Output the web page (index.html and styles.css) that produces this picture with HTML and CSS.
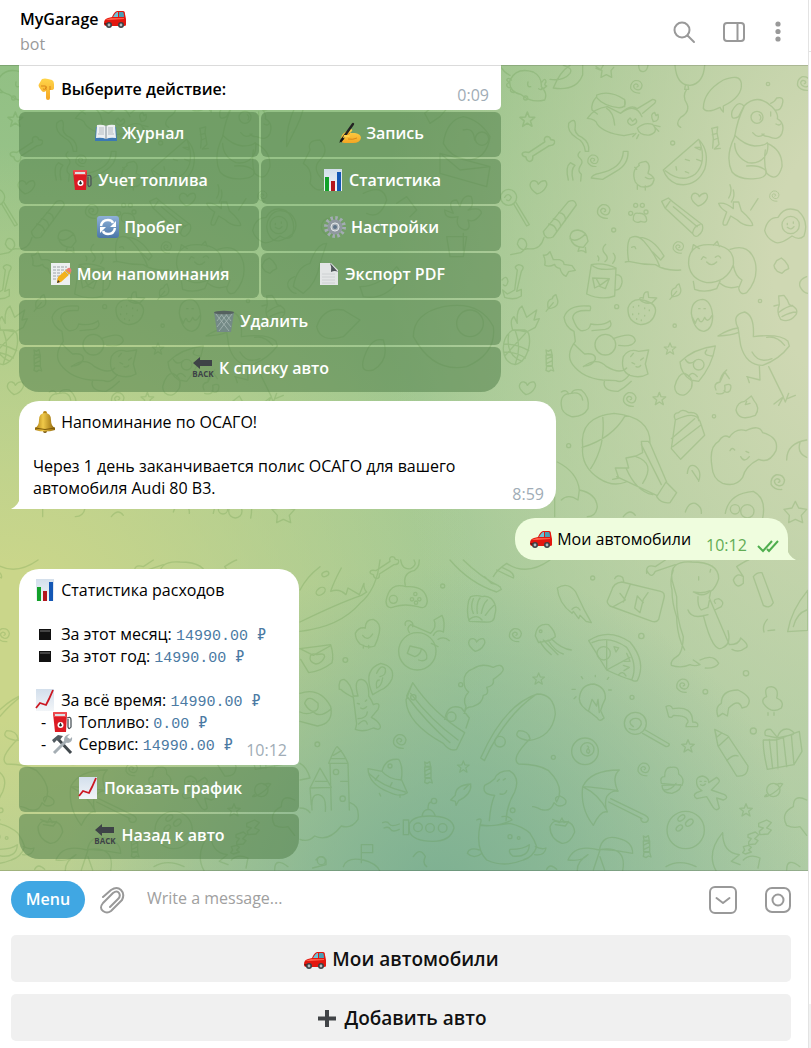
FILE: index.html
```html
<!DOCTYPE html>
<html lang="ru">
<head>
    <meta charset="UTF-8">
    <meta name="viewport" content="width=device-width, initial-scale=1.0">
    <title>MyGarage</title>
    <link rel="stylesheet" href="styles.css">
</head>
<body>

<!-- emoji and doodle symbols -->
<svg class="sprite" aria-hidden="true">
    <defs>
        <linearGradient id="gold" x1="0" x2="1" y1="0" y2="0"><stop offset="0" stop-color="#a8780c"/><stop offset=".4" stop-color="#f0c94a"/><stop offset="1" stop-color="#8f6408"/></linearGradient>
        <linearGradient id="skin" x1="0" x2="0" y1="0" y2="1"><stop offset="0" stop-color="#ffd54a"/><stop offset="1" stop-color="#f5a623"/></linearGradient>
        <linearGradient id="paper" x1="0" x2="0" y1="0" y2="1"><stop offset="0" stop-color="#d3dfec"/><stop offset="1" stop-color="#f2f5f8"/></linearGradient>
        <linearGradient id="blue" x1="0" x2="0" y1="0" y2="1"><stop offset="0" stop-color="#8fb1d8"/><stop offset="1" stop-color="#4a76a8"/></linearGradient>
    </defs>
    <symbol id="car" viewBox="0 0 24 22">
        <path d="M1 15q0-4 4-5l4-1q2-5 5-6h6q2 0 2 3l1 5v6q0 1-2 1H3q-2 0-2-3z" fill="#e3170f"/>
        <path d="M10 9q2-4 4-5h1v5z" fill="#6cc5d8"/><path d="M16 4h4q1 1 1 5h-5z" fill="#4a9fb5"/>
        <path d="M2 12l6-2 13 0v1l-13 1z" fill="#ff5a45"/><path d="M1 15h4v2H2z" fill="#7d130f"/>
        <circle cx="6" cy="17" r="3" fill="#3b4145"/><circle cx="18" cy="17" r="3" fill="#3b4145"/>
        <circle cx="6" cy="17" r="1.4" fill="#b4bcc0"/><circle cx="18" cy="17" r="1.4" fill="#b4bcc0"/>
    </symbol>
    <symbol id="point" viewBox="0 0 24 22">
        <path d="M9 1q3-1 6 0l4 1q2 1 2 4v4q0 2-3 2h-1v8q0 2-2 2t-2-2v-7l-2 1q-2 0-3-2L6 9Q5 7 6 6z" fill="url(#skin)"/>
        <path d="M8 8h4q2 0 1 2t-3 1M13 12V9M17 12V8" fill="none" stroke="#d9861a"/>
    </symbol>
    <symbol id="book" viewBox="0 0 24 22">
        <path d="M2 5h20l1 14H1z" fill="#3c78b4"/><path d="M3 3q5-1 9 1v13q-4-2-10-1zM21 3q-5-1-9 1v13q4-2 10-1z" fill="#eceff1"/>
        <path d="M12 4v13" stroke="#7d8a94"/><path d="M5 6h5M5 8h5M5 10h5M4 12h6M14 6h5M14 8h5M14 10h5M14 12h6" stroke="#b5bcc2"/>
    </symbol>
    <symbol id="write" viewBox="0 0 24 22">
        <path d="M3 18q0-5 3-7l6-4q3 0 2 2l-2 2h5q6 1 6 5-1 5-8 5H7q-4 0-4-3z" fill="url(#skin)"/>
        <path d="M12 11q-2 2-5 2M10 17q5 1 9-1" stroke="#d9861a" fill="none"/>
        <path d="M3 19L15 2" stroke="#222" stroke-width="2.4" stroke-linecap="round"/><path d="M1 21l3-5 2 1z" fill="#111"/><path d="M6 13l5 0q2 2-1 2l-5 1z" fill="#ffd04a"/>
    </symbol>
    <symbol id="fuel" viewBox="0 0 24 22">
        <path d="M17 7q4-2 4 2v7q-2 3-3 0V8" fill="none" stroke="#4d555a" stroke-width="1.3"/>
        <path d="M3 2h14l-1 19H5z" fill="#dc1b24"/><path d="M3 1h14l-1 5H4z" fill="#ef4a4f"/><path d="M5 3h10v2H5z" fill="#dce2e4"/>
        <circle cx="10.500" cy="14" r="3" fill="#fff"/><path d="M10.500 11.500l1.500 3q-1.500 2-3 0z" fill="#222"/>
    </symbol>
    <symbol id="bars" viewBox="0 0 24 22">
        <path d="M3 0h18v22H3z" fill="url(#paper)"/><path d="M4 8h4v14H4z" fill="#12a12a"/><path d="M10 12h4v10h-4z" fill="#b3151d"/><path d="M16 3h4v19h-4z" fill="#1457b5"/>
    </symbol>
    <symbol id="reload" viewBox="0 0 24 22">
        <rect x="1" y="0" width="22" height="22" rx="3" fill="url(#blue)"/>
        <path d="M5 10q1-6 7-6 4 0 5 3M19 12q-1 6-7 6-4 0-5-3" fill="none" stroke="#fff" stroke-width="2.400"/><path d="M20 5v6h-6zM4 17v-6h6z" fill="#fff"/>
    </symbol>
    <symbol id="gear" viewBox="0 0 24 22">
        <circle cx="12" cy="11" r="9" fill="none" stroke="#a3acb3" stroke-width="4" stroke-dasharray="2.400 2.312"/>
        <circle cx="12" cy="11" r="6" fill="#a9b1b7" stroke="#8f989f" stroke-width="3"/><circle cx="12" cy="11" r="4" fill="none" stroke="#e0e4e7"/><circle cx="12" cy="11" r="2" fill="#5d7387"/>
    </symbol>
    <symbol id="memo" viewBox="0 0 24 22">
        <path d="M2 0h19v22H2z" fill="#edf0f1"/><path d="M4 4h14M4 7h13M4 10h9M4 13h8M4 16h5" stroke="#9da4a8" stroke-dasharray="3 1"/>
        <path d="M8 18l1-4 9-8 4 4-10 9-4 1z" fill="#f2b21d"/><path d="M17 7l2-2q2-1 3 1t0 3l-1 1z" fill="#e77d78"/><path d="M16 8l4 4" stroke="#b8c0c4"/><path d="M8 20l1-3 2 2z" fill="#39332b"/>
    </symbol>
    <symbol id="page" viewBox="0 0 24 22">
        <path d="M3 0h11l7 7v15H3z" fill="#e3e5e6"/><path d="M13 0l8 9q-3-2-7 0 1-5-1-9z" fill="#4e5559"/><path d="M5 11h13M5 14h13M5 17h13M5 20h13" stroke="#cdd0d2"/>
    </symbol>
    <symbol id="bin" viewBox="0 0 24 22">
        <path d="M2 2h20l-3 20H5z" fill="#748a86"/><path d="M4 4l13 17M8 3l11 14M13 3l6 8M20 4L7 21M16 3L5 17M11 3l-6 8" stroke="#a7b8b4" stroke-width=".8"/><ellipse cx="12" cy="2.500" rx="10" ry="1.800" fill="#55615f"/>
    </symbol>
    <symbol id="bell" viewBox="0 0 24 22">
        <circle cx="12" cy="2" r="2" fill="#b5830f"/><circle cx="12" cy="20" r="2" fill="#6d4c0a"/>
        <path d="M12 2q6 0 6 7 0 6 4 8v2q-10 3-20 0v-2q4-2 4-8 0-7 6-7z" fill="url(#gold)"/><path d="M2 17q10 3 20 0" fill="none" stroke="#7c5909"/>
    </symbol>
    <symbol id="square" viewBox="0 0 24 22"><path d="M6 6h12v11H6z" fill="#111"/><path d="M7 7h10v2H7z" fill="#444"/></symbol>
    <symbol id="trend" viewBox="0 0 24 22">
        <path d="M3 0h18v22H3z" fill="url(#paper)"/><path d="M3 19l4-5 6 2 3-6 4-9" fill="none" stroke="#cc1821" stroke-width="1.800"/>
    </symbol>
    <symbol id="tools" viewBox="0 0 24 22">
        <path d="M21 20L8 6" stroke="#41484d" stroke-width="3"/><path d="M2 7l6-5 5 1-4 5-2-1-3 3z" fill="#525b61"/>
        <path d="M4 20L17 7" stroke="#a5aeb4" stroke-width="3"/><path d="M14 7q0-5 6-6l-3 3 3 2 2-2q1 5-4 6l-3-1z" fill="#a5aeb4"/>
    </symbol>
    <symbol id="plus" viewBox="0 0 24 22"><path d="M12 2v17M3 10.500h18" stroke="#414447" stroke-width="4"/></symbol>

    <symbol id="d-star" viewBox="-24 -24 48 48"><path d="M0-19L5-6 19-5 8 4 12 18 0 10-12 18-8 4-19-5-5-6z"/></symbol>
    <symbol id="d-spiral" viewBox="-24 -24 48 48"><path d="M12 21Q-8 22-17 7-20-12-3-20 16-22 20-5 18 13 3 10-8 6-8-3-3-12 5-7q5 6-2 8"/></symbol>
    <symbol id="d-heart" viewBox="-28 -24 56 48"><path d="M-4 20Q-24 6-24-6-22-20-10-18-2-16 0-8 8-20 20-18 28-10 22 0 14 16-4 20z"/></symbol>
    <symbol id="d-candy" viewBox="-18 -36 36 72"><path d="M-10-32l7 4 8-5 3 14H-8zM-10-17H9V15H-9zM-8 17H9l4 14-8-3-7 5-8-4zM-10-4L9-14M-9 9L9 0"/></symbol>
    <symbol id="d-leaf" viewBox="-24 -28 48 56"><path d="M-22 26L0 0M-15 18Q-22-8-3-12-2-20 8-24l3 10Q22 14-15 18"/></symbol>
    <symbol id="d-bone" viewBox="-46 -36 92 72"><path d="M-24 10L18-18q-4-12 6-14 8 0 10 8 12 0 10 8-2 8-14 8L-14 20q2 12-8 14-9-2-10-12-10-2-10-8 2-8 18-4z"/></symbol>
</svg>

<div class="window">
<div class="chat">

    <header class="header">
        <div>
            <h1 class="title">MyGarage <svg class="emoji"><use href="#car"/></svg></h1>
            <p class="status">bot</p>
        </div>
        <div class="header-actions">
            <button class="icon-btn" aria-label="Search">
                <svg width="24" height="24" viewBox="0 0 24 24"><circle cx="10" cy="10" r="7.500"/><path d="M15.500 15.500L22 22"/></svg>
            </button>
            <button class="icon-btn" aria-label="Info">
                <svg width="24" height="24" viewBox="0 0 24 24"><rect x="2" y="3" width="20" height="18" rx="3"/><path d="M15.500 3v18"/></svg>
            </button>
            <button class="icon-btn dots" aria-label="More">
                <svg width="6" height="24" viewBox="0 0 6 24"><circle cx="3" cy="4" r="2.600"/><circle cx="3" cy="11.500" r="2.600"/><circle cx="3" cy="19" r="2.600"/></svg>
            </button>
        </div>
    </header>

    <main class="history">
        <svg class="wallpaper" viewBox="0 195 2424 2418" preserveAspectRatio="xMidYMid slice" aria-hidden="true">
            <g id="doodles">
                <!-- top right -->
                <g transform="translate(1680 0)">
                    <path d="M108 205l14 5 8-15M108 200l18 12-3 20 16-8 16 8-2-20 8-10M236 196q0 20 14 19 12-2 14-20"/>
                    <path d="M345 196q5 60 45 60 40-5 44-60M376 256l-2 12 12 0-2-12M380 268q-14 20 0 42 12 25-18 42-18 20 0 30"/>
                    <path d="M430 325q0-50 60-85 50-20 54 10 4 40-54 68l0 18q-8-8-10-14-40 20-50 3z"/>
                    <path d="M110 285q40-16 84 14 8 26-20 24-44-6-64-30zM110 290q-18 20-14 40l16 12M194 300v20M82 355q20-30 60-35l40 20q44-34 64 10M82 355q26 2 30 18 20 26 80 34l30-6M140 325q20 10 24 50M182 340q30-30 50-14l46-28q14 2 6 12l-36 30"/>
                    <path d="M232 385q20-20 46-12 20 24-10 32-30 2-36-20zM214 376q-20-10-4-22l8 10 8-8q12 14-12 20zM280 365q-12-24 4-28l4 10 6-4q6 20-14 22M228 400l-10 10M236 404l-6 12M284 376l16 4M284 382l12 12"/>
                    <path d="M26 370q20-20 20 6-6 26 20 36 24 16 20 42l-10 0q-4-30-26-40-30-20-24-44zM60 455q-12 10 0 20t0 24q-8 14 4 24l-2 20M25 540q-10-40 6-52l14 8q-14 14-6 44"/>
                    <path d="M190 454h14q2 40-36 60l-40 24-34-4q2-10 24-14 70-14 72-66z"/>
                    <path d="M310 510l106-92q34 36 18 90-26 56-84 44-30-12-40-42zM316 512q50 40 90 10 36-36 12-100M405 442l16 8 0-8zM376 478l12 4M410 478l16 6M348 500l2 10M376 515l10 4"/>
                    <path d="M455 385l18-4-2 16 6 36-14 14 18-2M456 386l4 30-2 28M457 404l14-4M460 420l15-6"/>
                    <path d="M552 318q40-40 84 2 20 20 16 36 24 14 14 44-10 24-40 10-14 0-20-8M552 318q-18-20-36 16-6 30 20 16zM632 310q12-4 18-16 22-6 18 14-4 24-20 22M552 320q-20 40-28 90-30 60-8 106 20 24 70 20 40-4 30-26-20-16-56-12M524 406q30 30 60 32 30 0 38-10M524 430q0 40 40 58 40 6 56-28 6-20 2-32M622 430q46 20 44 70-14 50-46 20-10-30-4-70M648 372q10 6 14 0M578 398q16 20 34 4"/>
                    <circle cx="591" cy="352" r="18"/><path d="M598 344q8 6 2 16M632 336v12"/>
                </g>
                <!-- top left corner of the open area -->
                <g transform="translate(1500 180)">
                    <path d="M30 60q20-40 70-24 26 14 24 44 20 20 10 40-40 10-70-16-40-10-34-44zM34 60q-10-10-14 0l8 8q-14 4-4 14l10 2q-8 12 8 14M126 66q10-16 12 0-8 10 2 12-6 8-16 8M0 16q10 20 30 30M84 66q-4 16 8 14M116 86q8 6 12 0M160 84q20-50 50-68M160 84q70 10 88-40v-30M190 16q30 8 20 24-20 24-60 18"/>
                    <path d="M406 366q-8-20-2-36 6-10 14-14-8-8 20-12 16 10 6 36 20 10 18 20-6 26-40 20-10-4-16-14zM412 376v12M436 378v12M436 352q10 8 22 2M404 322l6 6"/>
                    <path d="M690 374q8 20-4 40M700 390q6 20-6 36M752 450l22-34"/>
                </g>
                <!-- right side -->
                <g transform="translate(1500 600)">
                    <path d="M130 95l75-90q20-10 24 10l-70 96q-24 10-29-16zM146 72q20 2 24 22M160 56q22 4 22 24M176 38q22 2 20 24M132 112q-10 40-50 34-20 10-30-14 4-24 20-14 20 20-10 40l-30 6M40 10L80 78l8-4L48 8"/>
                    <circle cx="26" cy="-8" r="24"/><path d="M14-8q10-16 20 0-6 14-14 8"/>
                    <path d="M485 4l20-10 14 12 88 68q6 20-14 34-10 4-14-6L495 24zM510 4l-14 20M600 74q-18 4-22 24M520 20l72 60"/>
                    <path d="M400 60q-2-24 16-20 22-2 24 20 0 10-18 4-14 8-22-4z"/><circle cx="392" cy="40" r="6"/><circle cx="407" cy="16" r="6"/><circle cx="427" cy="16" r="6"/><circle cx="438" cy="36" r="6"/>
                    <path d="M656 10q20-4 44 16l0-20 16 0 8 26q34 30 34 44-26 4-46-16l-20-12-12 26q-14 6-10-10l10-28q-20-12-24-26zM794 92q8-40 40-40 20-36 60-20 34 30 18 76-14 14-36 0-40 30-56 16-20-10-26-32z"/>
                    <circle cx="872" cy="75" r="26"/><path d="M862 70v4M880 66v4M862 82q12 10 20-2"/>
                    <path d="M210 110q2-20 24-20 28 4 30 34l-14 18q-34 0-40-32zM238 142l-4 12q14-6 24 4l-2-16M210 116q20 14 46-14"/>
                    <path d="M130 165q10 4 20-10l10 24 18 0q14 4 14 14l24 4 10 14-20 4-8 14q-14-6-18-24-14-2-16-12-18 10-30 2 4-14-4-30z"/>
                    <path d="M274 194q34-8 74 10l-4 84q-40 14-84-6zM274 194q20 20 74 12M348 224q20 0 18 24-4 24-22 22M278 234l50 2-12 30-20-8-12 6zM290 238l10 18 28-20M295 182q4-8-2-14M315 185q14-10 0-24t2-28M338 190q14-16 2-30"/>
                    <path d="M376 186l10-2q-8-50 4-70 20-12 40 8 36 40 50 80M386 184q40 10 80 10 30 20 76 16M418 112q40 0 74 56l-10 12-24-24M395 142q10-6 12 4"/>
                    <path d="M566 194q-4-60 60-60 80 0 74 60-20 54-80 54-48-10-54-54zM576 152l4-18 18 12M640 136l12-12 6 16M604 178l6-8 8 4M646 172q10-10 16 2M620 186q14 16 30 0M690 148q60-20 76 40 10 50-26 90-20 10-24-14l10-24q-20-10-26-44M580 244l4 24q30 12 66-2l10-22M660 250q24 20 54 10"/>
                    <path d="M822 196l8-14 14-8 10 8 10 14 2 10-12 6-8 8-14-6-8-10zM920 230q-26 10-20 30 10 20 24 20M822 318l16-4-2-26 16-2 10 14 6 14q30 10 20 30-20 26-46 14-14-20-4-44zM838 336q20-16 40-20M846 350q24-14 44-14"/>
                    <path d="M6 240q14-18 18 4-4 20-14 10M44 270l8-60q-14-10 4-16 22 4 8 20l-14 60 14-6 0 20q-20 14-50 4l-6-22 14 12z"/>
                    <path d="M384 324q10-30 44-24 44 10 38 38-8 34-44 36-40-8-38-50zM420 300q-4-10 10-6 0-20 14-18l2 16 24 2-14 14q-20 6-36-8"/>
                    <path d="M400 320v2M416 316v2M434 324v2M448 330v2M398 342v2M416 340v2M434 346v2M410 356v2M424 360v2"/>
                    <path d="M574 340q0-40 34-42 26 4 30 50 0 40-26 46-30-2-38-54zM576 350l10 20q8-24 12-8 8 10 16-10 8 20 22-6M596 326h4M612 326h4"/>
                    <path d="M38 390q-30 20-28 60 4 40 36 44 34-10 42-60 4-40-14-44zM12 432q40 0 74 20M10 456q40 0 66 18M46 392q20 50 0 100M26 404q-10 60 40 80M76 400L14 468M38 390q-10-30 4-40l10 20q-4-40 14-52l14 34 30-22-8 30 16-4-12 26-26 14-20-4z"/>
                    <path d="M270 332q6-16-6-14-60-4-72 34 4 30 30 42l4 30q-30 40-8 70 30 40 90 46l40 2q20 10 40-18M270 332q-50-4-52 22 10 30 24 38 26 2 30-20 40 6 58-10 10 20-14 26l-40 4M222 432q20 20 32 30 34-4 32 16-10 20-34 20M250 500q40-30 70 0 40 24 60 4M314 540q-10 34 40 34 20-10 40-30"/>
                    <circle cx="316" cy="434" r="31"/><path d="M370 470q-10 44 20 56 30 10 54-4l-8-30 10-42-30 4q-30-10-46 16zM340 416q60-24 66 6-8 20-50 14M396 488l8 4M422 480l8-6M408 500q10 4 14-4M400 460l-8 10"/>
                    <path d="M540 486q40-40 106-48-10 60-50 106l-24-4q-30-20-32-54zM556 478q10 20 30 4M620 450q-14 16 16 18M524 560q10-40 30-40 30 14 20 44-20 34-44 14-6-8-6-18z"/><circle cx="596" cy="494" r="16"/><path d="M566 530q10-20 26 0"/>
                    <path d="M654 408q30-20 60-24-20-40 20-48 30 10 26 74 80-10 104 14l4 14q-30 40-80 58-50 0-66-60l-8-54M654 408q40-2 60-10M800 412q30-6 54 24M756 456q20 36 60 20M778 496l2 44-40-10M742 530l6 18M806 500l44 90M822 612l28-22-14 26M850 592l6 14 10-26M862 596l24-10"/>
                    <path d="M648 570q-10-20 12-24l14-30M660 546q0-20 20-36M674 516l14 20M650 580q30 8 24-24 26-10 16 16-10 10-18 0"/>
                    <path d="M184 616q-4-36 30-36 6-14 30-10 26 20 20 56-14 26-50 24-30-10-30-34zM214 580q30-6 34 20M184 576q16-10 22 6M708 630q4-24 26-26l20-16 8 14q20 22 4 44-50 20-58-16zM740 604l-4 10 14-4"/>
                    <path d="M248 740q-10-90 94-100 110 10 108 90M248 740q-6 60 50 96 40 26 80 10M450 730l-6-6-20 0 4 34-20 10-30 6 8 30-40 0 10 30-18 4M308 646q10 90-36 160M376 646q-40 70-130 96M450 730l50 116M424 734l60 120M350 830l120 56M378 804q30 70 80 80M408 770q60 20 20 80M470 890l28-44 32 32-20 30q-26 4-40-18z"/>
                    <path d="M514 746l12-86q60-30 74 4l14 42-72 72zM526 660q-10-20 10-22 10-14 30 0 30-4 30 24M514 716l70-60M518 740l84-64"/>
                    <path d="M636 800q-10-60 20-76 14-24 32-12 20-30 50-20 40-20 50 6 50 14 40 54-20 40-52 26-40 20-48 54-20 30-60 18-30-14-32-50zM690 752q6-12 14-2M722 770q10 20 26 0M738 754l8 4"/>
                    <path d="M562 820q4-34 26-20 18 14 8 44M596 842l-20-30M860 780q0-50 60-60M900 728q-10 30 20 44M676 940q10-60 84-66 40 20 28 80M164 950v-60M172 786q60 30 66 84l-4 30q-30-20-50 0M238 870q50 10 54 50-4 30-30 30M556 936q10-30 30-26 20 10 18 30M370 950q20-26 36-4"/><circle cx="705" cy="928" r="14"/><circle cx="742" cy="934" r="20"/>
                    <path d="M886 904l10 20 24 4-16 18 4 22-22-10-20 10 2-22-16-18 24-4z"/>
                </g>
                <!-- lower part -->
                <g transform="translate(900 1680)">
                    <path d="M240 0q-10 90-60 130-60 70-180 84M0 186q110-54 184-80l16-10q-10-10-8-26l-14 34-34-20-6 20q-20-20-46-10 10-30 32-70M0 90q20-40 60-70"/><ellipse cx="62" cy="94" rx="15" ry="10" transform="rotate(-35 62 94)"/><ellipse cx="76" cy="42" rx="11" ry="7" transform="rotate(-25 76 42)"/>
                    <path d="M302 0q4 30 30 26 20-10 10-26M358 0q0 30-24 34-26 10-18 42M258 124q10-60 60-44 60-4 64 44-4 26-28 16-40-10-70 0-24 10-26-16z"/><circle cx="280" cy="118" r="12"/><circle cx="346" cy="102" r="5"/><circle cx="336" cy="118" r="5"/><circle cx="358" cy="118" r="5"/><circle cx="348" cy="128" r="5"/>
                    <path d="M450 0q60 70 140 96l14-8q-4-14-30-18l-20-20M490 0q50 50 110 80M590 30l50 24q4-10-10-20l-24-12M580 50q10-20 40-40 60 40 130-10M506 122l6-12q20-6 34 0 14-4 28 6 20 20 10 50 0 24-30 20l-46-2q-10-24-2-62zM520 160q-10-20 0-44M532 160q-4-30 8-46M544 160q6-30 18-40M556 166q14-20 26-30M506 180q24-20 40 0"/>
                    <path d="M772 84q30-20 54 10l26 54 22 40-16-4-18-18-4 10-16-22-4 6q-40-30-44-76zM816 148q14-14 24 2M1040 40q-4-30 26-20l30-20M1040 30q14 30 26 4l60-20"/>
                    <path d="M934 94q6-26 32-28l116 28q14 4 10 20l-16 64q-6 10-20 6l-126-46q-10-10-8-16zM960 100l16 20-36 20M990 76l-20 50M1044 98l-14 20-10 40-16-14 8-36 18 20M944 56q6-14 24-4l4 16"/>
                    <path d="M1116 60q-10-60 60-54 80 0 80 50-10 30-24 38l-4 20 60 140q30 0 34-20 30 24 14 30-20 16-40 4M1116 60l14 50q-2 60 20 120-2 50-20 60-20 12-16 26 30 10 56-2 14 6 30 0l-20-14M1200 300q40-20 56 10-10 16-40 14M1120 30q-12 30-4 60 0 40 14 80 0 40 14 80l10 20M1180 96q30 6 50-4-8 14-32 12zM1196 60v-10M1230 36l2-8M1194 110q-2 30 10 40l20-8 4-20M1164 150q10 30 60 14M1210 166q30 120 60 96 24-10 14-50M1246 130q-10-12 10-14 20 10 8 24l-20 10"/>
                    <path d="M1300 60q10-24 30-10l0 20q-20 20-30-10M1330 50l-20-30q30-20 36-20M1360 50q10-14 26-12l34 90q-10 20-30 8zM1463 215l60-4v-120q-50 60-60 124zM1480 200q10-40 40-50M1392 216q-6-20 10-38M1404 212l20-2"/>
                    <path d="M166 220q10-20 30-16 0-26 24-26 24 10 18 40-4 20-14 40-20 8-44-6-14-14-14-32zM188 226q14 20 30-4M190 256v8M206 256v8M0 266q50-6 92-12 10 30 4 54-30 24-70 30l-24-40M0 266l40 20 50-28M30 296q0-20 20-12 24-6 24 6-8 20-26 22-16-4-18-16z"/>
                    <circle cx="352" cy="274" r="56"/><path d="M316 196q-4-14 12-14 14 6 10 18M328 218q-10-14 4-24l60 26q20-20 10-40l24-14q10 20 4 50-20-10-30 10M322 280l8-22 34 8q-2 20-20 24zM364 266q20 10 16 30-10 10-24 4M414 238q20-10 34 4M394 250l20 10"/>
                    <path d="M706 228q4-40 40-34 20 20 20 36l-14 10-36 8zM720 244q10 20 34 40M730 240q20 20 44 44M744 240q20 34 46 42M754 236q30 30 60 34"/><circle cx="722" cy="214" r="4"/>
                    <path d="M866 242q60-40 124 4 50 60 22 116-10 4-16-2-20-4-76-30zM876 248q50-24 104 14 34 50 16 96M920 242v88l70-38"/><circle cx="911" cy="280" r="20"/><path d="M942 260l14 4-8 12zM980 280l10 24-18 0M970 316l18 6-16 10M956 344q12-14 22 4"/>
                    <path d="M118 388q-4-30 14-30 20 10 28 50l14 0q-14-50 10-50 24 4 22 50 10 14 14 26 24-10 14 14l-20 24q20 10 26 24 4 10-6 12l-14-4q-30 14-54 4l4-16-10-80q-24-10-38-24zM172 430l6 2M196 424l4-4M182 444q10 6 18-4M174 476q26 0 28-20M176 492q20-20 26 0"/><path d="M218 404l-6-16q-20-60 30-78 44 10 34 46-10 24-34 34zM238 360q-12 0-8 24 14-4 18-30M230 340q14-30 26-14 4 20-16 24"/>
                    <path d="M0 400q60-20 92 40 10 50-40 58L0 484M0 456q20 10 40 0 20 20 54-10M14 430q10-30 40 0 4 24-16 24-14-4-24-24z"/>
                    <path d="M338 368q60 90 156 150l-24 50q-20 8-40-18-110-60-112-130zM338 368l-18 40q60 80 130 140M332 400q60 80 142 140M434 478q10-50 50-34l24 30-10 30M494 460q0-20 24-20 30-10 32-34 20-4 10-24 24-4 20-24 30-20 30-30-4-20-30-6-34-14-60 4-30 10-28 40 0 20 14 30-20 20-8 44l-6 20"/><circle cx="454" cy="470" r="14"/><circle cx="340" cy="412" r="8"/>
                    <path d="M542 594q70-160 170-192 50 0 54 60-10 70-80 80-50-10-30-30 30 0 34 24-60 60-34 76 60 0 90 20 50 50 24 94-10-16 10-18 24 10 16 24-20 14-34-4-10 30-40 20-20-10-24-8M554 600q60-130 150-194M542 594l12 8"/><circle cx="600" cy="545" r="16"/>
                    <path d="M838 416q4-44 44-44 36 10 34 44-10 20-14 36l10 22q-14 14-20 0l-20-16q-34-20-34-42zM866 452l10-34 14 20 4-20 4 40M816 388h10M822 416l6-6M848 356l-4-6M886 350v-4M922 358l4-6M926 390h8"/>
                    <circle cx="1006" cy="490" r="33"/><path d="M1000 500q-20-14 0-24 24-4 24 16-10 26-36 14M1036 510l72 42q0 8-10 8l-70-40M1098 440q14-8 20 6 60-10 60 40 20 0 14 14h-34q0-8 6-14 0-20-44-20-4 10-14 4zM1254 470q-10-30 10-40 0-40 50-40 50 24 26 50l-14 4q-10-30-40 0l-4 24-14-8zM1390 430q-6-14 10-20-10-30 14-30 24 4 16 34 24 10 14 30-30 20-54-14zM1404 458v8M1422 458v8"/>
                    <circle cx="855" cy="574" r="40"/><circle cx="862" cy="568" r="20"/><path d="M862 558q8 4 0 10-6 8 4 12 6-6 0-12"/>
                    <path d="M1244 508l40 20 60 90q0 34-34 30l-56-90zM1256 558l30-28M1280 602q20-20 34-14M1244 508l6 24 14-12M1390 540l40 0 68-26 8 60-24 40-80 14q-14-60-12-88zM1408 538l10 88M1430 538l4 88M1450 532l10 88M1474 524l8 90M1396 526q-6-20 16-18l20 24q10-30 36-24 20 10 10 16l-46 10z"/>
                    <!-- castle on a cloud -->
                    <path d="M86 610q20-50 26-50 20 20 32 50zM90 610l4 140M144 610l4 140M0 610q20 10 30 44l-30 6M30 684l30-60 34 58zM30 684l4 50M36 750q-4-50 20-46 24 4 20 50M94 596h44M100 586l24-14M122 664h24M46 664h34M0 744q20 0 30 14M150 728q30 10 24 50-20 30-50 20-40 50-80 30-20 20-44 10"/><circle cx="108" cy="636" r="8"/><circle cx="128" cy="716" r="8"/>
                    <path d="M204 626l42 8q10-40 50-36 14 20 8 60l18 40q-20 16-56-2-60-24-62-70zM246 634q20 24 58 26M206 640q40 40 110 56M238 700l4 8M300 704v8M226 660l10-14M270 680l6-12"/><circle cx="270" cy="618" r="6"/>
                    <path d="M452 720l14-14q0-30 46-34 4 30-36 50l-8 14-2-12zM492 688l14-14M366 768q4-20 20-20 14 2 20 20M384 746q0-20 10-20M328 792q10-24 60-24 70 0 74 36-10 40-64 40-60 0-70-30zM310 780h16v44h-16zM248 788q14-6 20 4t30 0M252 804q14-6 20 4t26 0"/><circle cx="402" cy="723" r="8"/><circle cx="354" cy="802" r="13"/><circle cx="390" cy="804" r="13"/><circle cx="428" cy="804" r="13"/>
                    <path d="M568 782q4-50 16-76-40-2-30-30 20-10 30-20 10-24 44-24 34 20 16 64-24 40-26 86M592 664l6-6M610 660l6-4M600 702q16 4 20-10M530 780q20-10 10 14 50 10 96-14-10-14-30-10M540 796q-14 70 20 104 50 24 110 0 30-10 40-40-6-20-20-40-20-20-60-30-60 10-90 6M538 870q-30-10-36 10 20 20 44 0M630 868q40 0 58-14-2 40-50 34-14-10-8-20zM706 860q20 10 32 4-4 24-34 20"/><circle cx="630" cy="830" r="6"/><circle cx="656" cy="834" r="4"/>
                    <path d="M750 800q10-24 30-14 40-8 44 30-14 36-38 34-36-14-36-50zM758 778l20 10 8-14 6 14 14-4-10 14-30-4M848 680q24-50 110-50-24 20-4 64-20-4-34 16-8 20 2 46-20-6-42 40-40-50-32-116zM848 680q20 0 106 12M848 680q50 24 74 74M932 716l104 50q16 10 4 20-16 4-18-10M926 726l100 50"/>
                    <path d="M1084 670q-6-20 10-20 0-30 20-28 24-4 22 20 20 14 10 34zM1086 676q0 24 30 24 30-10 26-26zM1094 690q20 0 34-20M1190 670q-4-20 18-22 20 6 18 20l24-16q14 10 4 18l-20 20 40 14q14 10-4 16l-20-6 8 30q-10 12-20-4l-18-30-30 6q-14-10 0-18l16-6q-14-8-16-22zM1200 664h4M1214 664h4M1202 674q8 6 14-2"/><circle cx="1420" cy="690" r="20"/><path d="M1400 704q-14 10 4 4 30-14 44-36-6-4-20 2"/>
                    <circle cx="1157" cy="810" r="56"/><ellipse cx="1144" cy="774" rx="12" ry="7" transform="rotate(-40 1144 774)"/><ellipse cx="1168" cy="788" rx="13" ry="8" transform="rotate(-40 1168 788)"/><ellipse cx="1138" cy="804" rx="11" ry="7" transform="rotate(-40 1138 804)"/>
                    <path d="M1376 790l24-10 14 8-14 16 14 6-10 12-24 2-2-10 12-10-14-4zM1344 824l22-8 10 8-12 12 10 6-8 10-20 2 0-8 8-10-10-4zM1330 860l16-4 8 6-8 8 8 6-18 6-8-4 6-8zM1268 818q-50 60-20 114M1268 818q0 60 50 66l-24 20 26 10M1330 900q20-20 50-6l-6 30M1520 720q-40-20-40 20-40 20-20 56 20 10 40 4l20 26"/>
                    <path d="M804 900q20-50 94-30 10-50 60-34 40 10 40 44-50-10-96-12 80-10 66 64M804 900q40 6 60-16-34 20-32 50M900 870l-20 60M900 890l14 40M1098 920q40-24 90 0M130 920q10-30 60-20 40 10 50 34M184 908v-54l34 0v24h-32M340 890q20-30 36 0-10 20 4 30M48 900q14-20 30 0l0 14-40 10M740 928q10-20 30 0M1460 930q0-40 40-10"/><circle cx="64" cy="902" r="12"/>
                </g>
                <!-- behind the inline buttons -->
                <g transform="translate(750 180)">
                    <path d="M170 100q-10 60-30 100l-30 60q-4-60 30-130 10-30 30-30zM150 110l14 10M560 130l40-40q20-10 30 10l-60 70-30 20-16-30zM640 90q20-20 30 14 40-20 80 10M580 250q10-70 60-80 50 10 80 60-10 70-70 70-50-10-70-50zM640 210q30-10 34 30M570 280l150 40-10 60-140-40zM570 280l60 50 90-10"/><circle cx="696" cy="236" r="20"/>
                    <path d="M180 270q-10-30 30-30 30 30 0 60t20 70q-20 40-50 0 10-40-20-60zM340 400q60-30 70 20-20 60-60 40M440 430l30-20 30 40-20 20M60 470q20-30 60-10 30 30 10 60-50 40-70 10-20-30 0-60zM610 460q-20-40 10-40l10 20q10-40 34-30 10 30-10 40 40-10 40 10-20 30-40 20 10 30-10 30-30-10-20-40-40 10-40-20zM640 520v50M590 530h60l-10 60h-40z"/>
                    <path d="M130 680q10-60 50-70 20-60 50-60l-20 60q-10 60-50 90zM330 680q60 0 110-60 20 20 0 50-40 50-100 40zM200 800q20-60 80-50l50 30-50 50q-70 20-80-30zM490 830q0-70 90-90 110-20 150 60 10 80-80 120-100 20-160-90zM340 900q20-70 60-60 20 60-30 90-40 10-30-30z"/><circle cx="240" cy="500" r="26"/><circle cx="660" cy="790" r="40"/>
                </g>
                <circle cx="1577" cy="294" r="6"/><circle cx="2018" cy="429" r="6"/><circle cx="2304" cy="252" r="5"/><circle cx="1841" cy="690" r="6"/><circle cx="1850" cy="920" r="6"/><circle cx="2024" cy="977" r="5"/><circle cx="2280" cy="903" r="5"/><circle cx="1706" cy="1337" r="6"/><circle cx="2142" cy="1249" r="5"/><circle cx="1328" cy="1758" r="6"/><circle cx="1036" cy="1980" r="7"/><circle cx="1382" cy="2054" r="6"/><circle cx="1778" cy="1734" r="6"/><circle cx="1924" cy="1908" r="8"/><circle cx="2238" cy="2020" r="8"/><circle cx="1896" cy="2092" r="6"/><circle cx="1660" cy="2272" r="6"/><circle cx="952" cy="2233" r="7"/><circle cx="1538" cy="2431" r="7"/><circle cx="2260" cy="2193" r="9"/><circle cx="2116" cy="2075" r="7"/>
                <use href="#d-spiral" x="1886" y="238" width="44" height="44"/><use href="#d-spiral" x="1758" y="462" width="40" height="40"/><use href="#d-spiral" x="2386" y="226" width="48" height="48"/><use href="#d-spiral" x="1786" y="610" width="48" height="48"/><use href="#d-spiral" x="2014" y="722" width="40" height="40"/><use href="#d-spiral" x="2304" y="570" width="36" height="36"/><use href="#d-spiral" x="1864" y="1174" width="48" height="48"/><use href="#d-spiral" x="2306" y="1420" width="52" height="52"/><use href="#d-spiral" x="1522" y="1882" width="46" height="46"/><use href="#d-spiral" x="2024" y="2034" width="46" height="46"/><use href="#d-spiral" x="1174" y="2200" width="48" height="48"/><use href="#d-spiral" x="1908" y="2286" width="44" height="44"/>
                <use href="#d-star" x="1988" y="1024" width="44" height="44"/><use href="#d-star" x="1954" y="1172" width="48" height="48"/><use href="#d-star" x="1594" y="2014" width="44" height="44"/><use href="#d-star" x="1368" y="2278" width="44" height="44"/><use href="#d-star" x="2040" y="2214" width="48" height="48"/><use href="#d-star" x="2214" y="2406" width="48" height="48"/><use href="#d-star" x="1554" y="330" width="56" height="56"/>
                <use href="#d-heart" x="1554" y="1140" width="56" height="48"/><use href="#d-heart" x="1402" y="1910" width="56" height="48"/><use href="#d-heart" x="1586" y="536" width="58" height="50"/><use href="#d-heart" x="2070" y="574" width="56" height="48"/>
                <use href="#d-candy" x="1630" y="1044" width="36" height="76"/><use href="#d-candy" x="1266" y="2282" width="36" height="72"/><use href="#d-candy" x="1922" y="2504" width="36" height="72"/>
                <use href="#d-leaf" x="1636" y="880" width="48" height="56"/><use href="#d-leaf" x="2004" y="848" width="52" height="52"/>
                <use href="#d-bone" x="1106" y="1666" width="92" height="72"/><use href="#d-bone" x="1562" y="394" width="104" height="104"/>
            </g>
            <use href="#doodles" x="-1536"/>
        </svg>

        <section class="message wide">
            <div class="bubble has-keys scrolled"><b><svg class="emoji"><use href="#point"/></svg> Выберите действие:</b><time class="time">0:09</time></div>
            <div class="inline-keys two">
                <button class="key"><svg class="emoji"><use href="#book"/></svg> Журнал</button>
                <button class="key"><svg class="emoji"><use href="#write"/></svg> Запись</button>
                <button class="key"><svg class="emoji"><use href="#fuel"/></svg> Учет топлива</button>
                <button class="key"><svg class="emoji"><use href="#bars"/></svg> Статистика</button>
                <button class="key"><svg class="emoji"><use href="#reload"/></svg> Пробег</button>
                <button class="key"><svg class="emoji"><use href="#gear"/></svg> Настройки</button>
                <button class="key"><svg class="emoji"><use href="#memo"/></svg> Мои напоминания</button>
                <button class="key"><svg class="emoji"><use href="#page"/></svg> Экспорт PDF</button>
                <button class="key full"><svg class="emoji"><use href="#bin"/></svg> Удалить</button>
                <button class="key full last"><svg class="emoji back" viewBox="0 0 24 22"><path d="M2 6l7-6v3h12v6H9v3z"/><text x="12" y="20" text-anchor="middle">BACK</text></svg> К списку авто</button>
            </div>
        </section>

        <section class="message reminder">
            <div class="bubble tail-in">
                <p><svg class="emoji"><use href="#bell"/></svg> Напоминание по ОСАГО!</p>
                <br>
                <p>Через 1 день заканчивается полис ОСАГО для вашего<br>автомобиля Audi 80 B3.</p>
                <time class="time">8:59</time>
                <svg class="tail" width="9" height="12" viewBox="0 0 9 12"><path d="M9 0Q8 8 0 12H9z"/></svg>
            </div>
        </section>

        <section class="message out">
            <div class="bubble tail-out">
                <svg class="emoji"><use href="#car"/></svg> Мои автомобили
                <span class="time">10:12
                    <svg class="checks" width="22" height="14" viewBox="0 0 22 14"><path d="M1 7l5 5L15 2M10 10l2 2 9-10"/></svg>
                </span>
                <svg class="tail" width="9" height="12" viewBox="0 0 9 12"><path d="M0 0Q1 8 9 12H0z"/></svg>
            </div>
        </section>

        <section class="message stats">
            <div class="bubble has-keys">
                <p><svg class="emoji"><use href="#bars"/></svg> Статистика расходов</p>
                <br>
                <p><svg class="emoji"><use href="#square"/></svg> За этот месяц: <code>14990.00 ₽</code></p>
                <p><svg class="emoji"><use href="#square"/></svg> За этот год: <code>14990.00 ₽</code></p>
                <br>
                <p><svg class="emoji"><use href="#trend"/></svg> За всё время: <code>14990.00 ₽</code></p>
                <p class="sub">- <svg class="emoji"><use href="#fuel"/></svg> Топливо: <code>0.00 ₽</code></p>
                <p class="sub">- <svg class="emoji"><use href="#tools"/></svg> Сервис: <code>14990.00 ₽</code></p>
                <time class="time">10:12</time>
            </div>
            <div class="inline-keys">
                <button class="key"><svg class="emoji"><use href="#trend"/></svg> Показать график</button>
                <button class="key last"><svg class="emoji back" viewBox="0 0 24 22"><path d="M2 6l7-6v3h12v6H9v3z"/><text x="12" y="20" text-anchor="middle">BACK</text></svg> Назад к авто</button>
            </div>
        </section>
    </main>

    <footer class="composer">
        <form class="compose-row">
            <button type="button" class="menu-btn">Menu</button>
            <button type="button" class="icon-btn attach" aria-label="Attach">
                <svg width="26" height="28" viewBox="0 0 26 28"><path d="M3 11L11 4q6-4 10 0t1 10L11 25q-4 3-8 0t0-8l10-10q4-3 6 0t-1 6l-8 8"/></svg>
            </button>
            <input class="message-input" type="text" placeholder="Write a message..." aria-label="Write a message">
            <button type="button" class="icon-btn" aria-label="Bot keyboard">
                <svg width="28" height="28" viewBox="0 0 28 28"><rect x="1" y="1" width="26" height="26" rx="5"/><path d="M7.500 12l6.500 5 6.500-5"/></svg>
            </button>
            <button type="button" class="icon-btn camera" aria-label="Video message">
                <svg width="26" height="28" viewBox="0 0 26 28"><rect x="1" y="2" width="24" height="24" rx="6"/><circle cx="13" cy="14" r="5.500"/></svg>
            </button>
        </form>
        <button class="reply-key"><svg class="emoji"><use href="#car"/></svg> Мои автомобили</button>
        <button class="reply-key"><svg class="emoji"><use href="#plus"/></svg> Добавить авто</button>
    </footer>
</div>
<aside class="side"></aside>
</div>

</body>
</html>
```

FILE: styles.css
```css
*{
    box-sizing: border-box;
}
body{
    margin: 0;
    font-family: "Open Sans", "Noto Sans", sans-serif;
    font-size: 16px;
    line-height: 22px;
    color: #000;
    background-color: #fff;
}
h1, p{
    margin: 0;
}
button, input{
    font-family: inherit;
    border: none;
    padding: 0;
}
button{
    cursor: pointer;
}
.sprite{
    position: absolute;
    width: 0;
    height: 0;
}
.window{
    display: flex;
    height: 100vh;
}
.chat{
    flex: 1;
    min-width: 0;
    display: flex;
    flex-direction: column;
}
.side{
    width: 3px;
    border-left: 1px solid #e3e3e3;
    background: linear-gradient(#fff 51px, #e3e3e3 51px, #e3e3e3 52px, #fff 52px, #fff calc(100% - 44px), #f1f1f1 calc(100% - 44px));
}
.emoji{
    width: 24px;
    height: 22px;
    vertical-align: -5px;
}
.back{
    font-size: 8px;
    font-weight: 700;
    fill: #3e4347;
}

/* header */
.header{
    position: relative;
    z-index: 1;
    display: flex;
    justify-content: space-between;
    align-items: center;
    height: 65px;
    padding: 0 27px 2px 20px;
    background-color: #fff;
    box-shadow: 0 1px 0 rgba(0, 0, 0, 0.14);
}
.title{
    font-size: 16px;
    font-weight: 600;
    line-height: 24px;
}
.status{
    line-height: 26px;
    color: #999;
}
.header-actions{
    display: flex;
    gap: 26px;
}
.icon-btn{
    display: flex;
    background: none;
}
.icon-btn svg{
    fill: none;
    stroke: #999;
    stroke-width: 2;
    stroke-linecap: round;
    stroke-linejoin: round;
}
.dots{
    margin-left: 3px;
}
.dots svg{
    fill: #999;
    stroke: none;
}

/* messages */
.history{
    position: relative;
    flex: 1;
    min-height: 0;
    overflow: hidden;
    display: flex;
    flex-direction: column;
    justify-content: flex-end;
    gap: 9px;
    padding: 0 20px 12px 19px;
    background:
        radial-gradient(ellipse 46% 40% at 54% 102%, rgba(124, 175, 145, 0.95), rgba(124, 175, 145, 0)),
        radial-gradient(ellipse 56% 100% at 104% 24%, #cfd8b3 15%, rgba(207, 216, 179, 0)),
        radial-gradient(ellipse 60% 62% at 0% 72%, #cad68a 15%, rgba(202, 214, 138, 0)),
        linear-gradient(#92c084, #a3c993 50%, #a1c69e);
}
.wallpaper{
    position: absolute;
    left: 0;
    top: 0;
    width: 100%;
    height: 100%;
    fill: none;
    stroke: #58903f;
    stroke-width: 4;
    stroke-linecap: round;
    stroke-linejoin: round;
    opacity: 0.22;
}
.message{
    position: relative;
    flex-shrink: 0;
    max-width: 100%;
}
.wide{
    width: 482px;
}
.reminder{
    width: 537px;
}
.out{
    align-self: flex-end;
    width: 273px;
}
.stats{
    width: 280px;
}
.bubble{
    position: relative;
    padding: 10px 14px;
    border-radius: 20px;
    background-color: #fff;
}
.bubble b{
    font-weight: 600;
}
.has-keys{
    border-radius: 20px 20px 5px 5px;
}
/* runs up under the header */
.scrolled{
    padding-top: 40px;
}
.tail-in{
    border-bottom-left-radius: 0;
}
.tail-out{
    border-bottom-right-radius: 0;
    background-color: #effdde;
}
.tail{
    position: absolute;
    bottom: 0;
    fill: #fff;
}
.tail-in .tail{
    left: -8px;
}
.tail-out .tail{
    right: -8px;
    fill: #effdde;
}
.time{
    position: absolute;
    right: 12px;
    bottom: 4px;
    color: #a0acb6;
}
.out .time{
    right: 9px;
    color: #62ac55;
}
.checks{
    margin-left: 6px;
    vertical-align: -2px;
    fill: none;
    stroke: #4fae4e;
    stroke-width: 2;
}
.sub{
    padding-left: 8px;
}
code{
    font-family: "Liberation Mono", monospace;
    font-size: 15px;
    line-height: 1;
    color: #4b7aa3;
}

/* buttons under a message */
.inline-keys{
    display: grid;
    gap: 2px;
    margin-top: 2px;
}
.two{
    grid-template-columns: 1fr 1fr;
}
.full{
    grid-column: 1 / -1;
}
.key{
    height: 45px;
    padding-bottom: 4px;
    border-radius: 6px;
    font-size: 16px;
    font-weight: 600;
    line-height: 22px;
    color: #fff;
    background-color: rgba(84, 130, 76, 0.55);
}
.last{
    border-radius: 6px 6px 20px 20px;
}

/* bottom area */
.composer{
    position: relative;
    display: flex;
    flex-direction: column;
    gap: 12px;
    padding: 10px 17px 7px 11px;
    background-color: #fff;
    box-shadow: 0 -1px 0 rgba(0, 0, 0, 0.14);
}
.compose-row{
    display: flex;
    align-items: center;
    margin-bottom: 5px;
}
.menu-btn{
    width: 74px;
    height: 37px;
    padding-bottom: 2px;
    border-radius: 19px;
    font-size: 16px;
    font-weight: 600;
    color: #fff;
    background-color: #40a7e3;
}
.attach{
    margin-left: 15px;
}
.message-input{
    flex: 1;
    min-width: 0;
    margin-left: 21px;
    padding-bottom: 3px;
    font-size: 16px;
    outline: none;
}
.message-input::placeholder{
    color: #a0a0a0;
}
.camera{
    margin-left: 28px;
}
.reply-key{
    height: 47px;
    border-radius: 5px;
    font-size: 19px;
    font-weight: 600;
    color: #111;
    background-color: #f0f0f0;
}
```
